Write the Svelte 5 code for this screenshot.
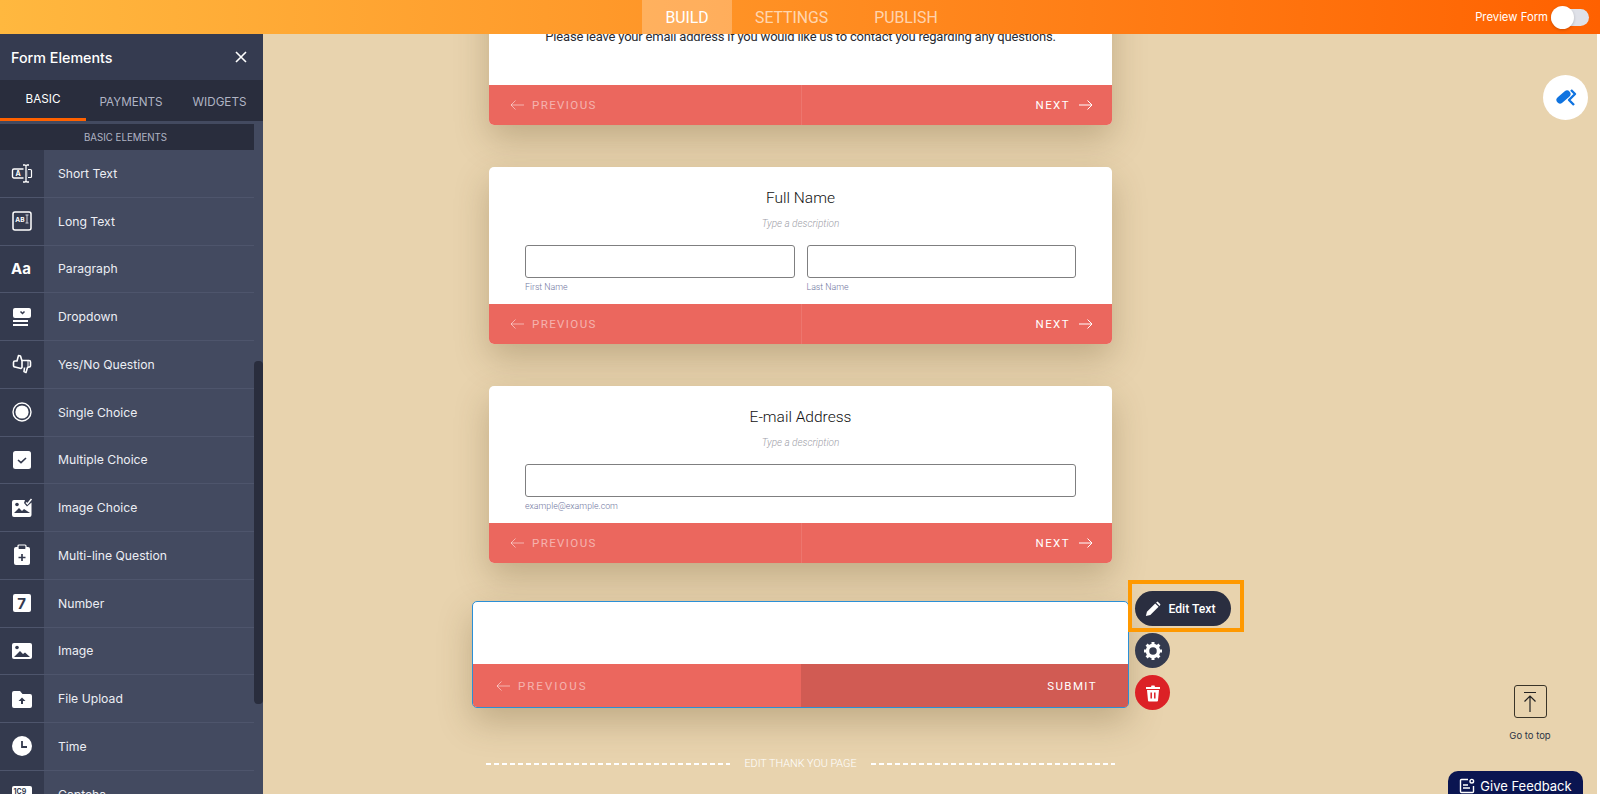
<script>
  const elements = [
    { id: 'short', label: 'Short Text' },
    { id: 'long', label: 'Long Text' },
    { id: 'para', label: 'Paragraph' },
    { id: 'drop', label: 'Dropdown' },
    { id: 'yesno', label: 'Yes/No Question' },
    { id: 'single', label: 'Single Choice' },
    { id: 'multi', label: 'Multiple Choice' },
    { id: 'imgch', label: 'Image Choice' },
    { id: 'multiline', label: 'Multi-line Question' },
    { id: 'number', label: 'Number' },
    { id: 'image', label: 'Image' },
    { id: 'upload', label: 'File Upload' },
    { id: 'time', label: 'Time' },
    { id: 'captcha', label: 'Captcha' }
  ];
</script>

{#snippet footer(nextLabel, active = false)}
  <div class="card-footer">
    <div class="prev">
      <svg width="14" height="10" viewBox="0 0 14 10" fill="none" stroke="currentColor" stroke-width="1"><path d="M14 5H1M5.500 .500 1 5l4.500 4.500" /></svg>
      <span>PREVIOUS</span>
    </div>
    <div class="next" class:active>
      <span>{nextLabel}</span>
      {#if !active}
        <svg width="14" height="10" viewBox="0 0 14 10" fill="none" stroke="currentColor" stroke-width="1"><path d="M0 5h13M8.500 .500 13 5l-4.500 4.500" /></svg>
      {/if}
    </div>
  </div>
{/snippet}

{#snippet icon(id)}
  <svg width="22" height="22" viewBox="0 0 22 22" fill="none">
    {#if id === 'short'}
      <rect x="1.500" y="7" width="14" height="9" rx="1.500" stroke="#fff" stroke-width="1.400" />
      <path d="M17 7.500h2.500a1 1 0 0 1 1 1v6a1 1 0 0 1-1 1H17" stroke="#fff" stroke-width="1.200" />
      <rect x="12.500" y="6" width="3.500" height="11" fill="#343a4e" />
      <path d="M12 3h2a1.500 1.500 0 0 1 1 1 1.500 1.500 0 0 1 1-1h2M15 4v15M12 20h2a1.500 1.500 0 0 0 1-1 1.500 1.500 0 0 0 1 1h2" stroke="#fff" stroke-width="1.300" />
      <text x="4.500" y="14.300" class="glyph" font-size="7">A</text>
    {:else if id === 'long'}
      <rect x="2" y="2" width="18" height="18" rx="2" stroke="#fff" stroke-width="1.500" />
      <text x="4.300" y="11.500" class="glyph" font-size="6.500">AB</text>
      <path d="M16 5v8M14.500 5h3M14.500 13h3" stroke="#cfd2dc" stroke-width="1" />
    {:else if id === 'para'}
      <text x="0" y="16" class="glyph bold" font-size="15">Aa</text>
    {:else if id === 'drop'}
      <path d="M4 2h14a2 2 0 0 1 2 2v6a2 2 0 0 1-2 2H4a2 2 0 0 1-2-2V4a2 2 0 0 1 2-2Z" fill="#fff" />
      <path d="m9.500 5.500 2 2 2-2" stroke="#343a4e" stroke-width="1.500" />
      <path d="M2 15h15M2 19h15" stroke="#fff" stroke-width="1.800" />
    {:else if id === 'yesno'}
      <path d="M7.500 2.500 6 8H4a1.500 1.500 0 0 0-1.500 1.500v3A1.500 1.500 0 0 0 4 14l6 1.500 1-1V8L9.500 3Z" stroke="#fff" stroke-width="1.600" stroke-linejoin="round" />
      <path d="M11 7.500h7a1.500 1.500 0 0 1 1.500 1.500v3.500A1.500 1.500 0 0 1 18 14l-1.500.5L15 19.500l-2-1 .5-4" stroke="#fff" stroke-width="1.600" stroke-linejoin="round" />
      <path d="M17 8v6" stroke="#fff" stroke-width="1" />
    {:else if id === 'single'}
      <circle cx="11" cy="11" r="9" stroke="#fff" stroke-width="1.400" />
      <circle cx="11" cy="11" r="6.600" fill="#fff" />
    {:else if id === 'multi'}
      <rect x="2" y="2" width="18" height="18" rx="2.500" fill="#fff" />
      <path d="m7 11 3 2.600L15 9" stroke="#343a4e" stroke-width="1.600" />
    {:else if id === 'imgch'}
      <path d="M3 3h11l-1 3 3 3.500 4.500-4V18a2 2 0 0 1-2 2H3a2 2 0 0 1-2-2V5a2 2 0 0 1 2-2Z" fill="#fff" />
      <path d="m15 5.500 1.500 1.500 4-5" stroke="#fff" stroke-width="1.500" />
      <circle cx="6" cy="7.500" r="1.800" fill="#343a4e" />
      <path d="m3 16 5-5 3 3 2-2 6 4Z" fill="#343a4e" />
    {:else if id === 'multiline'}
      <path d="M5 3h12a2 2 0 0 1 2 2v14a2 2 0 0 1-2 2H5a2 2 0 0 1-2-2V5a2 2 0 0 1 2-2Z" fill="#fff" />
      <rect x="7" y="1" width="8" height="4.500" rx="1" fill="#343a4e" stroke="#fff" stroke-width="1.200" />
      <path d="M11 10v7M7.500 13.500h7" stroke="#343a4e" stroke-width="1.700" />
    {:else if id === 'number'}
      <rect x="2" y="2" width="18" height="18" rx="2" fill="#fff" />
      <text x="6.200" y="17" class="glyph dark" font-size="15">7</text>
    {:else if id === 'image'}
      <rect x="1" y="3" width="20" height="16" rx="2" fill="#fff" />
      <circle cx="6" cy="7.500" r="1.800" fill="#343a4e" />
      <path d="m3 17 6-6 3 3 2-1.500 5 4.500Z" fill="#343a4e" />
    {:else if id === 'upload'}
      <path d="M3 3h6l2.500 3H19a2 2 0 0 1 2 2v10a2 2 0 0 1-2 2H3a2 2 0 0 1-2-2V5a2 2 0 0 1 2-2Z" fill="#fff" />
      <path d="m7.500 13 3.500-3.500 3.500 3.500H12v3h-2v-3Z" fill="#343a4e" />
    {:else if id === 'time'}
      <circle cx="11" cy="11" r="10" fill="#fff" />
      <path d="M11 6v6h5" stroke="#343a4e" stroke-width="1.800" />
    {:else}
      <rect x="1" y="3" width="20" height="16" rx="2" fill="#fff" />
      <text x="2.500" y="11" class="glyph dark" font-size="7">1C9</text>
    {/if}
  </svg>
{/snippet}

<div class="app">
  <header class="topbar">
    <nav class="nav">
      <span class="nav-item current">BUILD</span>
      <span class="nav-item">SETTINGS</span>
      <span class="nav-item">PUBLISH</span>
    </nav>
    <div class="preview">
      <span>Preview Form</span>
      <span class="toggle"><span class="knob"></span></span>
    </div>
  </header>

  <div class="workspace">
    <aside class="sidebar">
      <div class="side-head">
        <span>Form Elements</span>
        <svg width="12" height="12" viewBox="0 0 12 12" stroke="#fff" stroke-width="1.600"><path d="M1 1l10 10M11 1 1 11" /></svg>
      </div>
      <div class="side-tabs">
        <span class="side-tab current">BASIC</span>
        <span class="side-tab">PAYMENTS</span>
        <span class="side-tab">WIDGETS</span>
      </div>
      <div class="side-body">
        <div class="side-list">
          <div class="section">BASIC ELEMENTS</div>
          {#each elements as el}
            <div class="element">
              <div class="element-icon">{@render icon(el.id)}</div>
              <span>{el.label}</span>
            </div>
          {/each}
        </div>
        <div class="scrollbar"><div class="thumb"></div></div>
      </div>
    </aside>

    <main class="canvas">
      <div class="column">
        <section class="card">
          <div class="card-body first">
            <p class="lead">Please leave your email address if you would like us to contact you regarding any questions.</p>
          </div>
          {@render footer('NEXT')}
        </section>

        <section class="card">
          <div class="card-body">
            <h2>Full Name</h2>
            <p class="desc">Type a description</p>
            <div class="fields">
              <div class="field"><div class="input"></div><small>First Name</small></div>
              <div class="field"><div class="input"></div><small>Last Name</small></div>
            </div>
          </div>
          {@render footer('NEXT')}
        </section>

        <section class="card">
          <div class="card-body">
            <h2>E-mail Address</h2>
            <p class="desc">Type a description</p>
            <div class="fields">
              <div class="field"><div class="input"></div><small>example@example.com</small></div>
            </div>
          </div>
          {@render footer('NEXT')}
        </section>

        <section class="card selected">
          <div class="card-body blank"></div>
          {@render footer('SUBMIT', true)}

          <div class="tools">
            <div class="highlight"></div>
            <button class="pill">
              <svg width="16" height="16" viewBox="0 0 18 18" fill="#fff"><path d="M1 17l1.200-5L11.500 2.700l3.800 3.800L6 15.800Z" /><path d="m12.500 1.700.8-.7a1 1 0 0 1 1.400 0L17 3.300a1 1 0 0 1 0 1.400l-.7.800Z" /></svg>
              Edit Text
            </button>
            <button class="round">
              <svg width="20" height="20" viewBox="0 0 20 20"><circle cx="10" cy="10" r="5.500" fill="none" stroke="#fff" stroke-width="3.500" /><path d="M10 1v3M10 16v3M1 10h3M16 10h3M3.600 3.600l2.200 2.200M14.200 14.200l2.200 2.200M3.600 16.400l2.200-2.200M14.200 5.800l2.200-2.200" stroke="#fff" stroke-width="3" /></svg>
            </button>
            <button class="round danger">
              <svg width="18" height="18" viewBox="0 0 18 18" fill="#fff"><path d="M2 3h5l.5-1.500h3L11 3h5v2H2Z" /><path d="M3 6h12l-1 10.500a1 1 0 0 1-1 1H5a1 1 0 0 1-1-1Z" /><path d="M7.200 8.500v6M10.800 8.500v6" stroke="#dc2126" stroke-width="1.500" /></svg>
            </button>
          </div>
        </section>

        <div class="thanks">
          <span class="dash"></span>
          <span>EDIT THANK YOU PAGE</span>
          <span class="dash"></span>
        </div>
      </div>

      <button class="roller" aria-label="Form designer">
        <svg width="24" height="24" viewBox="0 0 24 24" fill="none" stroke="#0f73e0"><path d="M6 14l7-6" stroke-width="7" stroke-linecap="round" /><path d="M17 4l4 4-6 6 5 5" stroke-width="2.400" stroke-linejoin="round" /></svg>
      </button>

      <div class="go-top">
        <div class="go-box">
          <svg width="20" height="24" viewBox="0 0 20 24" fill="none" stroke="#222" stroke-width="1.200"><path d="M4 2.500h12M10 22V6M4.500 11.500 10 6l5.500 5.500" /></svg>
        </div>
        <span>Go to top</span>
      </div>

      <div class="feedback">
        <svg width="16" height="16" viewBox="0 0 16 16" fill="none" stroke="#fff" stroke-width="1.400"><path d="M9 1.500H2.500a1 1 0 0 0-1 1v11a1 1 0 0 0 1 1h11a1 1 0 0 0 1-1V8M4 7h5M4 10h7" /><circle cx="12.800" cy="3.200" r="1.800" /></svg>
        Give Feedback
      </div>
    </main>
  </div>
</div>

<style>
  :global(body) {
    margin: 0;
    background: #fff;
    overflow: hidden;
  }

  .app {
    height: 794px;
    display: flex;
    flex-direction: column;
    font-family: Inter, "Liberation Sans", sans-serif;
    overflow: hidden;
  }

  .topbar {
    flex: 0 0 34px;
    height: 34px;
    position: relative;
    z-index: 3;
    display: flex;
    align-items: center;
    justify-content: flex-end;
    background: linear-gradient(90deg, #ffb83f 0%, #ff9326 45%, #ff6100 100%);
    color: #fff;
  }

  .nav {
    position: absolute;
    left: 642px;
    top: 0;
    height: 34px;
    display: flex;
    font-family: Roboto, sans-serif;
    font-size: 15.800px;
    font-weight: 400;
  }

  .nav-item {
    padding: 0 23px;
    display: flex;
    align-items: center;
    color: rgba(255, 255, 255, 0.65);
  }

  .nav-item.current {
    width: 42px;
    padding: 0 24px;
    justify-content: center;
    color: #fff;
    background: rgba(255, 255, 255, 0.25);
  }

  .preview {
    display: flex;
    align-items: center;
    gap: 3px;
    padding-right: 11px;
    font-size: 11.300px;
  }

  .toggle {
    position: relative;
    width: 38px;
    height: 17px;
    border-radius: 9px;
    background: #dfe1e8;
  }

  .knob {
    position: absolute;
    left: 0;
    top: -3px;
    width: 23px;
    height: 23px;
    border-radius: 50%;
    background: #fff;
    box-shadow: 0 1px 3px rgba(0, 0, 0, 0.2);
  }

  .workspace {
    flex: 1;
    min-height: 0;
    display: flex;
  }

  .sidebar {
    flex: 0 0 263px;
    display: flex;
    flex-direction: column;
    background: #434a60;
    color: #fff;
    position: relative;
    z-index: 2;
  }

  .side-head {
    height: 46px;
    flex: none;
    display: flex;
    align-items: center;
    justify-content: space-between;
    padding: 0 16px 0 11px;
    background: #353b50;
    font-size: 14.300px;
    font-weight: 500;
  }

  .side-tabs {
    height: 41px;
    flex: none;
    display: grid;
    grid-template-columns: 86px 90px 87px;
    background: #292d3d;
  }

  .side-tab {
    display: flex;
    align-items: center;
    justify-content: center;
    font-size: 11.700px;
    color: #b0b4c4;
    box-sizing: border-box;
    padding-top: 2px;
  }

  .side-tab.current {
    color: #fff;
    border-bottom: 3px solid #ff6100;
    padding-top: 0;
  }

  .side-body {
    flex: 1;
    min-height: 0;
    display: flex;
    padding-top: 3px;
    overflow: hidden;
  }

  .side-list {
    flex: 1;
    min-width: 0;
  }

  .section {
    height: 26px;
    box-sizing: border-box;
    padding-right: 3px;
    display: flex;
    align-items: center;
    justify-content: center;
    background: #292d3d;
    color: #b0b4c4;
    font-size: 9.700px;
  }

  .element {
    height: 47.750px;
    box-sizing: border-box;
    display: flex;
    align-items: center;
    border-bottom: 1px solid #4e556c;
    font-size: 12.200px;
    color: #eceef4;
  }

  .element-icon {
    flex: 0 0 44px;
    align-self: stretch;
    display: flex;
    align-items: center;
    justify-content: center;
    background: #343a4e;
    margin-right: 14px;
  }

  .glyph {
    fill: #fff;
    font-family: Inter, sans-serif;
    font-weight: 700;
  }

  .glyph.dark {
    fill: #343a4e;
  }

  .scrollbar {
    flex: 0 0 9px;
    background: #434a60;
    padding-top: 237px;
  }

  .thumb {
    height: 343px;
    background: #292d3d;
    border-radius: 4px;
  }

  .canvas {
    flex: 1;
    position: relative;
    background: #e8d3ae;
    margin-right: 3px;
    overflow: hidden;
  }

  .column {
    width: 623px;
    margin: -65px 0 0 226px;
    display: flex;
    flex-direction: column;
    gap: 42px;
    font-family: Roboto, sans-serif;
  }

  .card {
    position: relative;
    background: #fff;
    border-radius: 5px;
    box-shadow: 0 14px 34px rgba(90, 70, 30, 0.28);
  }

  .card-body {
    height: 137px;
    box-sizing: border-box;
    padding-top: 21px;
    text-align: center;
  }

  .card-body.first {
    height: 116px;
    padding-top: 58px;
  }

  .lead {
    margin: 0;
    font-size: 13px;
    letter-spacing: -0.200px;
    line-height: 20px;
    color: #2a2a2e;
  }

  h2 {
    margin: 0;
    font-size: 15.500px;
    line-height: 20px;
    font-weight: 300;
    color: #111;
  }

  .desc {
    margin: 6px 0 0;
    font-size: 10px;
    line-height: 20px;
    font-style: italic;
    font-weight: 300;
    color: #a0a0a8;
  }

  .fields {
    display: flex;
    gap: 12px;
    margin: 11px 36px 0;
  }

  .field {
    flex: 1;
    text-align: left;
  }

  .input {
    height: 33px;
    box-sizing: border-box;
    border: 1px solid #7f7f80;
    border-radius: 3px;
  }

  small {
    display: block;
    margin-top: 3px;
    font-size: 8.800px;
    line-height: 12px;
    font-weight: 300;
    color: #6f76a0;
  }

  .card-footer {
    height: 40px;
    display: flex;
    border-radius: 0 0 5px 5px;
    overflow: hidden;
    background: #eb675e;
    font-size: 11.500px;
    letter-spacing: 1.400px;
    color: #fff;
  }

  .prev,
  .next {
    width: 50%;
    box-sizing: border-box;
    display: flex;
    align-items: center;
    gap: 8px;
  }

  .prev {
    padding-left: 21px;
    color: rgba(255, 255, 255, 0.5);
  }

  .next {
    justify-content: flex-end;
    padding-right: 19px;
    gap: 9px;
    border-left: 1px solid rgba(255, 255, 255, 0.1);
  }

  .next.active {
    background: #d15b53;
    padding-right: 31px;
    border-left: 0;
  }

  .selected {
    margin: -4px -17px 0;
    border: 1px solid #2b8fd6;
    border-radius: 5px;
  }

  .selected .prev {
    padding-left: 23px;
    letter-spacing: 2px;
  }

  .card-body.blank {
    height: 62px;
    padding: 0;
  }

  .selected .card-footer {
    height: 43px;
    border-radius: 0 0 4px 4px;
  }

  .tools {
    position: absolute;
    left: 662px;
    top: -11px;
    display: flex;
    flex-direction: column;
    align-items: flex-start;
    gap: 7px;
  }

  .highlight {
    position: absolute;
    left: -7px;
    top: -11px;
    width: 108px;
    height: 44px;
    border: 4px solid #ff9900;
  }

  button {
    border: 0;
    padding: 0;
    font: inherit;
    color: #fff;
  }

  .pill {
    position: relative;
    height: 35px;
    width: 96px;
    box-sizing: border-box;
    padding-right: 5px;
    display: flex;
    align-items: center;
    justify-content: center;
    gap: 7px;
    border-radius: 18px;
    background: #2a2e40;
    font-size: 12.200px;
    font-weight: 500;
  }

  .round {
    width: 35px;
    height: 35px;
    display: flex;
    align-items: center;
    justify-content: center;
    border-radius: 50%;
    background: #343a4e;
  }

  .round.danger {
    background: #dc2126;
  }

  .thanks {
    margin: 7px -3px 0 -3px;
    display: flex;
    align-items: center;
    gap: 14px;
    color: #fff;
    font-size: 10.800px;
    font-weight: 300;
    white-space: nowrap;
  }

  .dash {
    flex: 1;
    height: 2px;
    background: repeating-linear-gradient(90deg, #fff 0 5px, transparent 5px 8px);
  }

  .roller {
    position: absolute;
    right: 9px;
    top: 41px;
    width: 45px;
    height: 45px;
    display: flex;
    align-items: center;
    justify-content: center;
    border-radius: 50%;
    background: #fff;
  }

  .go-top {
    position: absolute;
    right: 37px;
    top: 651px;
    width: 60px;
    display: flex;
    flex-direction: column;
    align-items: center;
    gap: 12px;
    font-family: Inter, sans-serif;
    font-size: 9.500px;
    color: #2c3345;
  }

  .go-box {
    width: 33px;
    height: 33px;
    box-sizing: border-box;
    display: flex;
    align-items: center;
    justify-content: center;
    border: 1px solid #3a3428;
    border-radius: 3px;
  }

  .feedback {
    position: absolute;
    right: 14px;
    top: 737px;
    width: 135px;
    height: 30px;
    box-sizing: border-box;
    padding-top: 7px;
    display: flex;
    align-items: flex-start;
    justify-content: center;
    gap: 5px;
    border-radius: 10px 10px 0 0;
    background: #0a1551;
    color: #fff;
    font-size: 13px;
    font-family: Inter, sans-serif;
  }
</style>
